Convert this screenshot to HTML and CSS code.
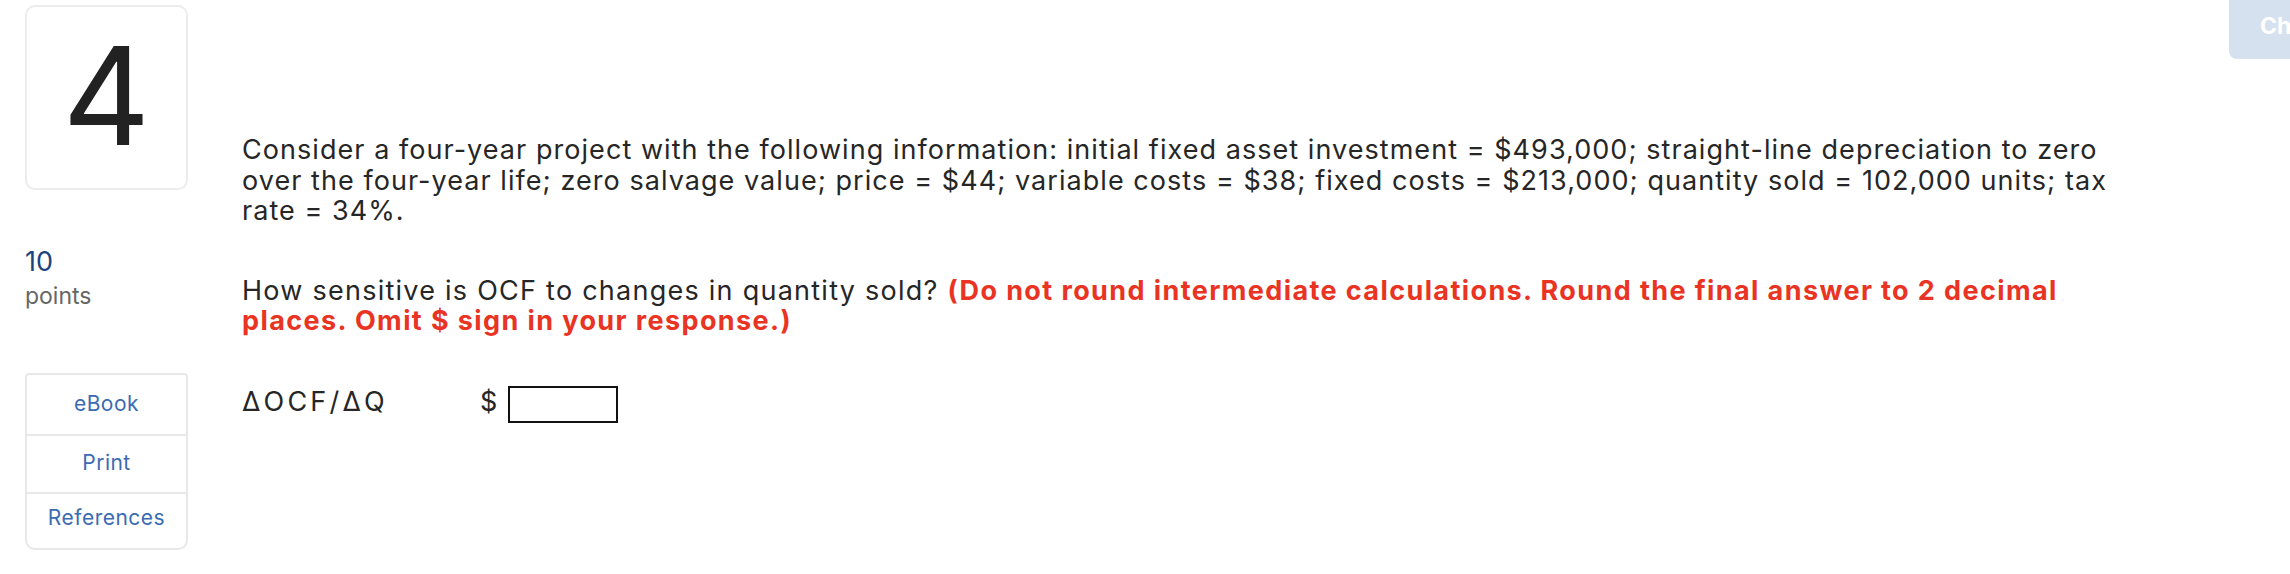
FILE: index.html
```html
<!DOCTYPE html>
<html lang="en">
<head>
<meta charset="utf-8">
<title>Question 4</title>
<link rel="stylesheet" href="styles.css">
</head>
<body>
<div class="page">
  <aside class="sidebar">
    <div class="qnum">4</div>
    <div class="points-value">10</div>
    <div class="points-label">points</div>
    <nav class="tools">
      <div class="tool tool-first">eBook</div>
      <div class="tool tool-mid">Print</div>
      <div class="tool tool-last">References</div>
    </nav>
  </aside>
  <main class="main">
    <p class="para">Consider a four-year project with the following information: initial fixed asset investment = $493,000; straight-line depreciation to zero<br>over the four-year life; zero salvage value; price = $44; variable costs = $38; fixed costs = $213,000; quantity sold = 102,000 units; tax<br>rate = 34%.</p>
    <p class="para para-q">How sensitive is OCF to changes in quantity sold? <strong class="note">(Do not round intermediate calculations. Round the final answer to 2 decimal<br>places. Omit $ sign in your response.)</strong></p>
    <div class="answer-row">
      <span class="answer-label">&Delta;OCF/&Delta;Q</span>
      <span class="dollar">$</span>
      <span class="answer-box"></span>
    </div>
  </main>
  <button class="check-btn" type="button">Check my work</button>
</div>
</body>
</html>
```
FILE: styles.css
```css
html, body {
  margin: 0;
  padding: 0;
  overflow: hidden;
  background: #ffffff;
}
body {
  font-family: Inter, "Liberation Sans", sans-serif;
  color: #262626;
}
.page {
  position: relative;
  display: flex;
  align-items: flex-start;
  width: 2290px;
  height: 574px;
}
.sidebar {
  width: 163px;
  padding: 5px 0 0 25px;
  flex: none;
}
.qnum {
  box-sizing: border-box;
  width: 163px;
  height: 185px;
  border: 2px solid #ececec;
  border-radius: 10px;
  display: flex;
  align-items: center;
  justify-content: center;
  font-size: 136px;
  line-height: 1;
  font-weight: 400;
  color: #222222;
  padding-bottom: 4px;
}
.points-value {
  margin-top: 57px;
  font-size: 27px;
  line-height: 30px;
  color: #1d4380;
}
.points-label {
  margin-top: 5px;
  font-size: 23px;
  line-height: 28px;
  color: #666666;
}
.tools {
  box-sizing: border-box;
  width: 163px;
  margin-top: 63px;
  border: 2px solid #e8e8e8;
  border-radius: 4px 4px 10px 10px;
}
.tool {
  text-align: center;
  font-size: 21px;
  line-height: 28px;
  letter-spacing: 0.5px;
  color: #3b6bb3;
}
.tool-first { padding: 15px 0 16px; }
.tool-mid { padding: 13px 0 15px; border-top: 2px solid #e8e8e8; }
.tool-last { padding: 10px 0 16px; border-top: 2px solid #e8e8e8; }
.main {
  width: 1960px;
  margin-left: 54px;
  padding-top: 135px;
  flex: none;
  font-size: 27px;
  letter-spacing: 1.05px;
}
.para {
  margin: 0;
  line-height: 30.5px;
}
.para-q {
  margin-top: 49px;
  line-height: 30px;
  letter-spacing: 1.25px;
}
.note {
  color: #e93323;
  font-weight: 700;
  letter-spacing: 1.4px;
}
.answer-row {
  display: flex;
  align-items: center;
  margin-top: 50px;
  line-height: 30px;
}
.answer-label {
  width: 238px;
  margin-bottom: 4px;
  letter-spacing: 3.2px;
}
.dollar {
  margin-bottom: 4px;
  margin-right: 10px;
}
.answer-box {
  box-sizing: border-box;
  width: 110px;
  height: 37px;
  border: 2px solid #111111;
  background: #ffffff;
}
.check-btn {
  position: absolute;
  top: -6px;
  left: 2229px;
  height: 65px;
  padding: 0 31px;
  border: none;
  border-radius: 8px;
  background: #d6e1f0;
  color: #ffffff;
  font-family: Inter, "Liberation Sans", sans-serif;
  font-weight: 700;
  font-size: 23px;
  line-height: 65px;
  white-space: nowrap;
  text-align: left;
}
```
